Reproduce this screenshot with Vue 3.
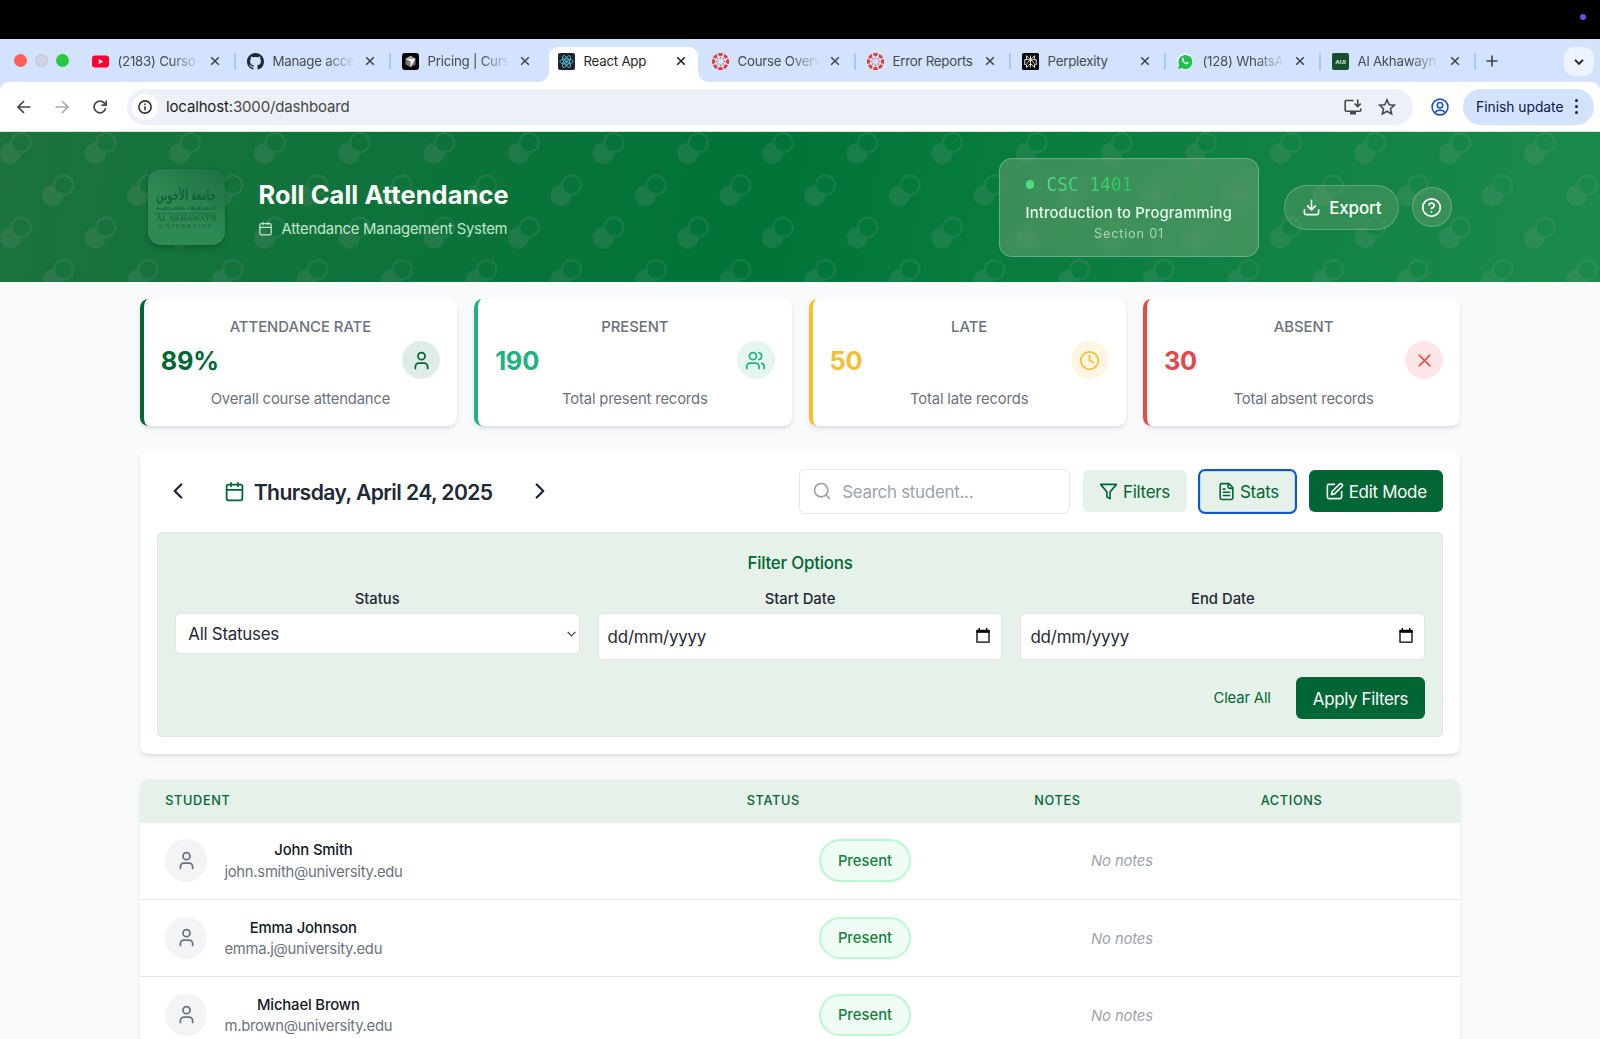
<script setup>
const tabs = [
  { icon: 'youtube', title: '(2183) Curso' },
  { icon: 'github', title: 'Manage acce' },
  { icon: 'cursor', title: 'Pricing | Curs' },
  { icon: 'react', title: 'React App', active: true },
  { icon: 'canvas', title: 'Course Overv' },
  { icon: 'canvas', title: 'Error Reports', full: true },
  { icon: 'perplexity', title: 'Perplexity', full: true },
  { icon: 'whatsapp', title: '(128) WhatsA' },
  { icon: 'aui', title: 'Al Akhawayn' },
]
const stats = [
  { label: 'Attendance Rate', value: '89%', note: 'Overall course attendance', tone: 'rate' },
  { label: 'Present', value: '190', note: 'Total present records', tone: 'present' },
  { label: 'Late', value: '50', note: 'Total late records', tone: 'late' },
  { label: 'Absent', value: '30', note: 'Total absent records', tone: 'absent' },
]
const students = [
  { name: 'John Smith', email: 'john.smith@university.edu' },
  { name: 'Emma Johnson', email: 'emma.j@university.edu' },
  { name: 'Michael Brown', email: 'm.brown@university.edu' },
]
const spokes = [0, 45, 90, 135, 180, 225, 270, 315]
</script>

<template>
  <div class="screen">
    <div class="menubar"><span class="rec"></span></div>

    <div class="tabstrip">
      <div class="lights"><i class="red"></i><i class="grey"></i><i class="green"></i></div>
      <div class="tabs">
        <div v-for="(t, i) in tabs" :key="i" class="tab" :class="{ active: t.active, before: i === 2 }">
          <svg class="fav" viewBox="0 0 17 17">
            <template v-if="t.icon === 'youtube'">
              <rect y="2.6" width="17" height="12" rx="3" fill="#ff0033" />
              <path d="M6.8 6v5.2l4.4-2.6z" fill="#fff" />
            </template>
            <path v-else-if="t.icon === 'github'" transform="scale(1.0625)" fill="#1f2937" d="M8 0C3.58 0 0 3.58 0 8c0 3.54 2.29 6.53 5.47 7.59.4.07.55-.17.55-.38 0-.19-.01-.82-.01-1.49-2.01.37-2.53-.49-2.69-.94-.09-.23-.48-.94-.82-1.13-.28-.15-.68-.52-.01-.53.63-.01 1.08.58 1.23.82.72 1.21 1.87.87 2.33.66.07-.52.28-.87.51-1.07-1.78-.2-3.64-.89-3.64-3.95 0-.87.31-1.59.82-2.15-.08-.2-.36-1.02.08-2.12 0 0 .67-.21 2.2.82.64-.18 1.32-.27 2-.27s1.36.09 2 .27c1.53-1.04 2.2-.82 2.2-.82.44 1.1.16 1.92.08 2.12.51.56.82 1.27.82 2.15 0 3.07-1.87 3.75-3.65 3.95.29.25.54.73.54 1.48 0 1.07-.01 1.93-.01 2.2 0 .21.15.46.55.38A8.01 8.01 0 0 0 16 8c0-4.42-3.58-8-8-8z" />
            <template v-else-if="t.icon === 'cursor'">
              <rect width="17" height="17" rx="3" fill="#050505" />
              <path d="M8.5 2.8l5 2.9v5.7l-5 2.9-5-2.9V5.7z" fill="#777" />
              <path d="M3.5 5.7h10l-5 8.6V8.6z" fill="#f2f2f2" />
              <path d="M8.5 2.8l5 2.9h-10z" fill="#a5a5a5" />
            </template>
            <template v-else-if="t.icon === 'react'">
              <rect width="17" height="17" rx="2" fill="#20232a" />
              <g fill="none" stroke="#5ccfee" stroke-width=".8">
                <ellipse cx="8.5" cy="8.5" rx="6.6" ry="2.6" />
                <ellipse cx="8.5" cy="8.5" rx="6.6" ry="2.6" transform="rotate(60 8.5 8.5)" />
                <ellipse cx="8.5" cy="8.5" rx="6.6" ry="2.6" transform="rotate(120 8.5 8.5)" />
              </g>
              <circle cx="8.5" cy="8.5" r="1.3" fill="#5ccfee" />
            </template>
            <template v-else-if="t.icon === 'canvas'">
              <g v-for="a in spokes" :key="a" :transform="`rotate(${a} 8.5 8.5)`" fill="#d9413a">
                <path d="M6 .3Q8.5 -.4 11 .3Q10.700 3.200 8.500 3.200Q6.300 3.200 6 .3z" />
                <circle cx="8.5" cy="4.800" r=".7" />
              </g>
            </template>
            <template v-else-if="t.icon === 'perplexity'">
              <rect width="17" height="17" rx="1.5" fill="#0a0a0a" />
              <path d="M8.5 2.5v12M4.500 2.700l4 4 4-4v4h1.800v5h-1.800v2.800l-4-4-4 4v-2.800H2.700v-5h1.800zM4.500 6.700h8M8.500 6.700l-4 4M8.500 6.700l4 4" fill="none" stroke="#f3f3ea" stroke-width=".9" />
            </template>
            <template v-else-if="t.icon === 'whatsapp'">
              <circle cx="8" cy="8.5" r="8" fill="#fff" />
              <path d="M1 16l1.100-4A7 7 0 1 1 4.700 14.900z" fill="#22bf4f" />
              <path d="M5.400 5.200c.5-.6 1.100-.4 1.300.1l.5 1.200-.6.900c.6 1.200 1.400 1.900 2.500 2.300l.8-.9 1.500.8c.3.200.1 1.200-.6 1.500-2.700 1-6.800-3.300-5.400-5.900z" fill="#fff" />
            </template>
            <template v-else>
              <rect width="17" height="17" rx="2" fill="#17502f" />
              <text x="8.5" y="11" text-anchor="middle" font-family="Liberation Sans, sans-serif" font-weight="700" font-size="6.2" fill="#e8efe9">AUI</text>
            </template>
          </svg>
          <span class="title" :class="{ fade: !t.full && !t.active }">{{ t.title }}</span>
          <svg class="close" viewBox="0 0 10 10"><path d="M1.200 1.200l7.600 7.600M8.800 1.200l-7.600 7.600" /></svg>
        </div>
      </div>
      <svg class="plus" viewBox="0 0 12 12"><path d="M6 .5v11M.5 6h11" /></svg>
      <div class="tabmenu"><svg viewBox="0 0 10 6"><path d="M1 .8l4 4 4-4" /></svg></div>
    </div>

    <div class="toolbar">
      <svg class="nav" viewBox="0 0 14 14"><path d="M13.500 7H1.300M7 1L1 7l6 6" /></svg>
      <svg class="nav dim" viewBox="0 0 14 14"><path d="M.5 7h12.200M7 1l6 6-6 6" /></svg>
      <svg class="nav" viewBox="0 0 14 14"><path d="M12.600 8.300A5.800 5.800 0 1 1 11.200 3l1.400 1.500" /><path d="M13.200 .5v4.700H8.500" /></svg>
      <div class="omnibox">
        <span class="info"><svg viewBox="0 0 14 14"><circle cx="7" cy="7" r="6.100" /><path d="M7 6.300v4M7 3.500v1.500" /></svg></span>
        <span class="url"><b>localhost</b>:3000/dashboard</span>
        <svg class="install" viewBox="0 0 18 16"><path d="M9.500 1.500H2.200a1 1 0 0 0-1 1v8.800a1 1 0 0 0 1 1h13.600a1 1 0 0 0 1-1V9.500M13.700 .5v6.800M10.700 4.600l3 3 3-3" /><path d="M6 14h6" stroke-width="3" /></svg>
        <svg class="star" viewBox="0 0 18 18"><path d="M9 1.800l2.150 4.900 5.250.5-3.950 3.500 1.150 5.200L9 13.200l-4.600 2.700 1.150-5.200L1.600 7.200l5.250-.5z" /></svg>
      </div>
      <svg class="profile" viewBox="0 0 18 18"><circle cx="9" cy="9" r="7.900" /><circle cx="9" cy="7.200" r="2.700" /><path d="M3.700 14.500c2.800-3.200 7.800-3.200 10.600 0" /></svg>
      <div class="update">Finish update<span class="dots"><i></i><i></i><i></i></span></div>
    </div>

    <header class="hero">
      <svg class="pattern" width="1600" height="150">
        <defs>
          <pattern id="circles" width="80" height="80" patternUnits="userSpaceOnUse" patternTransform="scale(1.0582)">
            <path fill="#a4a89e" d="M50 50c0-5.523 4.477-10 10-10s10 4.477 10 10-4.477 10-10 10c0 5.523-4.477 10-10 10s-10-4.477-10-10 4.477-10 10-10zM10 10c0-5.523 4.477-10 10-10s10 4.477 10 10-4.477 10-10 10c0 5.523-4.477 10-10 10S0 25.523 0 20s4.477-10 10-10zm10 8c4.418 0 8-3.582 8-8s-3.582-8-8-8-8 3.582-8 8 3.582 8 8 8zm40 40c4.418 0 8-3.582 8-8s-3.582-8-8-8-8 3.582-8 8 3.582 8 8 8z" />
          </pattern>
        </defs>
        <rect width="1600" height="150" fill="url(#circles)" />
      </svg>
      <div class="hero-inner">
        <div class="logo">
          <span class="ar">جامعة الأخوين</span>
          <span class="tif">ⵜⴰⵙⴷⴰⵡⵉⵜ ⵏ ⵍⴰⵅⴰⵡⴰⵢⵏ</span>
          <span class="en">AL AKHAWAYN</span>
          <span class="uni">UNIVERSITY</span>
        </div>
        <div class="brand">
          <h1>Roll Call Attendance</h1>
          <p>
            <svg class="ic" viewBox="0 0 24 24"><rect x="3" y="4" width="18" height="18" rx="2" /><path d="M16 2v4M8 2v4M3 10h18" /></svg>
            <span>Attendance Management System</span>
          </p>
        </div>
        <div class="course">
          <div class="code"><i></i><span>CSC 1401</span></div>
          <div class="name">Introduction to Programming</div>
          <div class="section">Section 01</div>
        </div>
        <button class="export">
          <svg class="ic" viewBox="0 0 24 24"><path d="M21 15v4a2 2 0 0 1-2 2H5a2 2 0 0 1-2-2v-4M7 10l5 5 5-5M12 15V3" /></svg>
          <span>Export</span>
        </button>
        <button class="help">
          <svg class="ic" viewBox="0 0 24 24"><circle cx="12" cy="12" r="10" /><path d="M9.090 9a3 3 0 0 1 5.830 1c0 2-3 3-3 3M12 17h.01" /></svg>
        </button>
      </div>
    </header>

    <main>
      <section class="stats">
        <article v-for="s in stats" :key="s.tone" class="stat" :class="s.tone">
          <h3>{{ s.label }}</h3>
          <div class="line">
            <strong>{{ s.value }}</strong>
            <span class="badge">
              <svg class="ic" viewBox="0 0 24 24">
                <path v-if="s.tone === 'rate'" d="M19 21v-2a4 4 0 0 0-4-4H9a4 4 0 0 0-4 4v2M16 7a4 4 0 1 1-8 0 4 4 0 0 1 8 0z" />
                <path v-else-if="s.tone === 'present'" d="M16 21v-2a4 4 0 0 0-4-4H6a4 4 0 0 0-4 4v2M13 7a4 4 0 1 1-8 0 4 4 0 0 1 8 0zM22 21v-2a4 4 0 0 0-3-3.870M16 3.130a4 4 0 0 1 0 7.750" />
                <template v-else-if="s.tone === 'late'"><circle cx="12" cy="12" r="10" /><path d="M12 6v6l4 2" /></template>
                <path v-else d="M18 6L6 18M6 6l12 12" />
              </svg>
            </span>
          </div>
          <p>{{ s.note }}</p>
        </article>
      </section>

      <section class="panel">
        <div class="bar">
          <svg class="ic chev" viewBox="0 0 24 24"><path d="M15 18l-6-6 6-6" /></svg>
          <div class="date">
            <svg class="ic" viewBox="0 0 24 24"><rect x="3" y="4" width="18" height="18" rx="2" /><path d="M16 2v4M8 2v4M3 10h18" /></svg>
            <h2>Thursday, April 24, 2025</h2>
          </div>
          <svg class="ic chev next" viewBox="0 0 24 24"><path d="M9 18l6-6-6-6" /></svg>
          <div class="search">
            <svg class="ic" viewBox="0 0 24 24"><circle cx="11" cy="11" r="8" /><path d="M21 21l-4.300-4.300" /></svg>
            <span>Search student...</span>
          </div>
          <button class="btn soft filters">
            <svg class="ic" viewBox="0 0 24 24"><path d="M22 3H2l8 9.460V19l4 2v-8.540L22 3z" /></svg><span>Filters</span>
          </button>
          <button class="btn soft focus">
            <svg class="ic" viewBox="0 0 24 24"><path d="M15 2H6a2 2 0 0 0-2 2v16a2 2 0 0 0 2 2h12a2 2 0 0 0 2-2V7zM14 2v4a2 2 0 0 0 2 2h4M10 9H8M16 13H8M16 17H8" /></svg><span>Stats</span>
          </button>
          <button class="btn solid edit">
            <svg class="ic" viewBox="0 0 24 24"><path d="M12 3H5a2 2 0 0 0-2 2v14a2 2 0 0 0 2 2h14a2 2 0 0 0 2-2v-7" /><path d="M18.375 2.625a2.120 2.120 0 0 1 3 3L12 15l-4 1 1-4z" /></svg><span>Edit Mode</span>
          </button>
        </div>

        <div class="options">
          <h4>Filter Options</h4>
          <div class="fields">
            <div class="field">
              <label>Status</label>
              <div class="control select"><span>All Statuses</span><svg viewBox="0 0 10 6"><path d="M.7 .7L5 5 9.300 .7" /></svg></div>
            </div>
            <div v-for="f in ['Start Date', 'End Date']" :key="f" class="field">
              <label>{{ f }}</label>
              <div class="control day">
                <span>dd/mm/yyyy</span>
                <svg viewBox="0 0 14 15"><path d="M1 3.500h12v10.700H1z" fill="none" stroke="#000" stroke-width="1.300" /><path d="M.4 1.800h13.200v3H.4zM2.600 0h1.400v2H2.600zM10 0h1.400v2H10z" fill="#000" /></svg>
              </div>
            </div>
          </div>
          <div class="actions"><button class="clear">Clear All</button><button class="btn solid apply"><span>Apply Filters</span></button></div>
        </div>
      </section>

      <section class="table">
        <div class="row head"><span>STUDENT</span><span>STATUS</span><span>NOTES</span><span>ACTIONS</span></div>
        <div v-for="p in students" :key="p.email" class="row body">
          <div class="student">
            <span class="avatar"><svg class="ic" viewBox="0 0 24 24"><path d="M19 21v-2a4 4 0 0 0-4-4H9a4 4 0 0 0-4 4v2" /><circle cx="12" cy="7" r="4" /></svg></span>
            <div class="who"><b>{{ p.name }}</b><span>{{ p.email }}</span></div>
          </div>
          <div class="cell"><span class="pill">Present</span></div>
          <div class="cell"><em>No notes</em></div>
          <div></div>
        </div>
      </section>
    </main>
  </div>
</template>

<style>
html { font-size: 16.93px; }
body { margin: 0; overflow: hidden; }
</style>

<style scoped>
* { box-sizing: border-box; }
.screen { width: 1600px; height: 1039px; overflow: hidden; background: #f9fafb; font-family: Inter, sans-serif; color: #1f2937; }
h1, h2, h3, h4, p { margin: 0; }
button { font: inherit; margin: 0; }
svg { display: block; flex: none; }
.ic { fill: none; stroke: currentColor; stroke-width: 2; stroke-linecap: round; stroke-linejoin: round; }

.menubar { height: 39px; background: #000; display: flex; justify-content: flex-end; padding: 14px 14px 0 0; }
.rec { width: 6px; height: 6px; border-radius: 50%; background: #5b54e8; }

.tabstrip { height: 43px; background: #d3e2fd; display: flex; }
.lights { width: 79.500px; flex: none; display: flex; gap: 8px; padding: 15px 0 0 13.500px; }
.lights i { width: 13px; height: 13px; border-radius: 50%; }
.red { background: #ff5f57; }
.grey { background: #ced4e1; border: 1px solid #c0c6d4; }
.green { background: #28c840; }
.tabs { display: flex; width: 1395px; flex: none; }
.tab { width: 155px; height: 44px; position: relative; display: flex; align-items: center; padding-left: 12px; font-size: 13.300px; color: #474b50; }
.tab::after { content: ''; position: absolute; right: -1px; top: 14px; width: 2px; height: 17px; border-radius: 1px; background: #a8c7fa; }
.tab.before::after { display: none; }
.fav { width: 17px; height: 17px; }
.title { margin-left: 9px; width: 80px; white-space: nowrap; letter-spacing: -.25px; }
.title.fade { -webkit-mask-image: linear-gradient(90deg, #000 52px, transparent 82px); mask-image: linear-gradient(90deg, #000 52px, transparent 82px); }
.close { width: 10px; height: 10px; margin-left: 12px; fill: none; stroke: #3f4347; stroke-width: 1.500; }
.tab.active { color: #1f1f1f; padding-left: 13px; }
.tab.active .close { stroke: #1f1f1f; }
.tab.active > * { position: relative; z-index: 1; }
.tab.active::before { content: ''; position: absolute; left: 4.500px; right: 1.500px; top: 7.500px; bottom: 0; background: #fff; border-radius: 9px 9px 0 0; z-index: 0; }
.tab.active::after { left: -5.500px; right: -8.500px; top: auto; bottom: 1px; width: auto; height: 10px; border-radius: 0; background: radial-gradient(circle at 0 0, transparent 9.500px, #fff 10px) left / 10px 10px no-repeat, radial-gradient(circle at 100% 0, transparent 9.500px, #fff 10px) right / 10px 10px no-repeat; }
.plus { width: 12px; height: 12px; margin: 15.500px 0 0 11.500px; fill: none; stroke: #3f4347; stroke-width: 1.600; }
.tabmenu { width: 30px; height: 29px; border-radius: 10px; background: #ecf2fe; margin: 8px 6px 0 auto; display: flex; align-items: center; justify-content: center; }
.tabmenu svg { width: 10px; height: 6px; fill: none; stroke: #1f1f1f; stroke-width: 1.900; }

.toolbar { height: 50px; background: linear-gradient(#fff, #fff) top / 100% 49px no-repeat, #d5e8dc; display: flex; align-items: center; padding: 0 6px 1px 16.500px; position: relative; }
.toolbar::before { content: ''; position: absolute; inset: 0 0 auto; height: 8px; background: radial-gradient(circle at 100% 100%, transparent 7.500px, #d3e2fd 8px) left / 8px 8px no-repeat, radial-gradient(circle at 0 100%, transparent 7.500px, #d3e2fd 8px) right / 8px 8px no-repeat; }
.nav { width: 14px; height: 14px; margin-right: 24px; fill: none; stroke: #474747; stroke-width: 1.700; }
.dim { stroke: #a9abae; }
.omnibox { width: 1286px; height: 36px; border-radius: 18px; background: #ecf0f9; display: flex; align-items: center; padding: 0 17px 0 5px; margin-left: -4px; }
.info { width: 26px; height: 26px; border-radius: 50%; background: #fff; display: flex; align-items: center; justify-content: center; }
.info svg { width: 14px; height: 14px; fill: none; stroke: #303134; stroke-width: 1.600; }
.url { margin-left: 8.500px; font-size: 15px; letter-spacing: -.15px; color: #474747; }
.url b { font-weight: 400; color: #1f1f1f; }
.install { width: 18px; height: 16px; margin-left: auto; margin-right: 16px; fill: none; stroke: #474747; stroke-width: 1.600; }
.star { width: 18px; height: 18px; fill: none; stroke: #474747; stroke-width: 1.600; }
.profile { width: 18px; height: 18px; margin: 0 13.500px 0 18.500px; fill: none; stroke: #1c55c4; stroke-width: 1.600; }
.update { width: 131px; height: 36px; border-radius: 18px; background: #d3e2fd; display: flex; align-items: center; justify-content: space-between; padding: 0 16px 0 13.500px; font-size: 13.800px; color: #0a2048; white-space: nowrap; }
.dots { display: flex; flex-direction: column; gap: 3px; }
.dots i { width: 3px; height: 3px; border-radius: 50%; background: #0a2048; }

.hero { height: 150px; position: relative; background: linear-gradient(100deg, #1b723c 0%, #007437 48%, #067b3c 60%, #1c8a4b 100%); }
.pattern { position: absolute; inset: 0; opacity: .14; }
.hero-inner { position: relative; height: 150px; width: 1304px; margin: 0 auto; display: flex; align-items: center; }
.logo { width: 76.500px; height: 76.500px; border-radius: 13px; background: linear-gradient(35deg, #2d8a52, #2c8a52 45%, #1d6f40); box-shadow: 0 3px 5px rgba(0, 50, 20, .3), 0 0 1px rgba(0, 50, 20, .6); display: flex; flex-direction: column; align-items: center; color: #17603a; white-space: nowrap; }
.ar { font: 700 13px/18px 'DejaVu Sans', sans-serif; margin-top: 17px; height: 18px; transform: scale(.66, 1.150); }
.tif { font: 700 4.600px/6px 'DejaVu Sans', sans-serif; margin-top: 2px; }
.en { font: 8.600px/9px 'Liberation Serif', serif; margin-top: 1px; border-top: .5px solid rgba(23, 96, 58, .6); letter-spacing: -.15px; }
.uni { font: 6.500px/6px 'Liberation Serif', serif; letter-spacing: 1.550px; }
.brand { margin-left: 34px; padding-top: 4px; }
.brand h1 { font-size: 1.500rem; line-height: 2rem; font-weight: 700; letter-spacing: .1px; color: #fff; }
.brand p { display: flex; align-items: center; font-size: .875rem; line-height: 1.250rem; letter-spacing: -.2px; color: #c3e6ce; margin-top: 6.500px; }
.brand p .ic { width: 15px; height: 15px; margin: -1px 8.500px 0 -.5px; }
.course { margin-left: auto; width: 260px; height: 99px; background: rgba(118, 163, 118, .47); backdrop-filter: blur(6px); border: 1px solid rgba(255, 255, 255, .25); border-radius: 13px; padding: 12px 0 0 25.500px; }
.code { display: flex; align-items: center; height: 28px; }
.code i { width: 8.500px; height: 8.500px; border-radius: 50%; background: #4ade80; }
.code span { margin-left: 12.500px; font: 17.500px/28px 'DejaVu Sans Mono', monospace; letter-spacing: .2px; transform: translateY(-1px) scaleY(1.130); background: linear-gradient(90deg, #4fdc84, #2cc765); -webkit-background-clip: text; background-clip: text; color: transparent; }
.name { font-size: .875rem; line-height: 1.250rem; font-weight: 500; letter-spacing: .15px; color: #e6f8ec; margin-top: 4px; white-space: nowrap; }
.section { width: 207px; text-align: center; font-size: .750rem; line-height: 1rem; letter-spacing: .8px; color: #a9d6b7; margin-top: 2px; }
.export { width: 115px; height: 45px; margin-left: 25px; border-radius: 23px; display: flex; align-items: center; justify-content: center; gap: 8.500px; padding: 1px 0 0; color: #fff; font-size: 1rem; letter-spacing: -.15px; font-weight: 500; background: rgba(118, 163, 118, .33); border: 1px solid rgba(255, 255, 255, .22); }
.export .ic { width: 19px; height: 19px; }
.help { width: 40px; height: 40px; margin: 0 .5px 0 12.500px; border-radius: 50%; padding: 0; display: flex; align-items: center; justify-content: center; color: #fff; background: rgba(118, 163, 118, .36); border: 1px solid rgba(255, 255, 255, .22); }
.help .ic { width: 21px; height: 21px; }

main { width: 1320.500px; margin: 0 auto; padding-top: 17px; }
.stats { display: grid; grid-template-columns: repeat(4, 1fr); gap: 17px; }
.stat { height: 127px; background: #fff; border-radius: .5rem; border-left: 4.200px solid; padding: 18px 17px 0; box-shadow: 0 3px 6px -1px rgba(0, 0, 0, .1), 0 2px 4px -2px rgba(0, 0, 0, .1); text-align: center; }
.stat h3 { font-size: .875rem; line-height: 1.250rem; font-weight: 500; text-transform: uppercase; color: #6b7280; }
.line { display: flex; align-items: center; justify-content: space-between; margin-top: 3px; height: 38px; }
.line strong { font-size: 1.500rem; font-weight: 700; letter-spacing: -.2px; padding-top: 1px; }
.badge { width: 38px; height: 38px; border-radius: 50%; display: flex; align-items: center; justify-content: center; }
.badge .ic { width: 21px; height: 21px; }
.stat p { font-size: .875rem; line-height: 1.250rem; letter-spacing: -.16px; color: #6b7280; margin-top: 10px; }
.rate { color: #006633; border-color: #006633; }
.rate .badge { background: #e0ece6; }
.present { color: #20b183; border-color: #20b183; }
.present .badge { background: #e5f6ee; }
.late { color: #f4bf33; border-color: #f4bf33; }
.late .badge { background: #fef6e2; }
.absent { color: #e2494a; border-color: #e2494a; }
.absent .badge { background: #fde6e6; }

.panel { margin-top: 25px; height: 303px; background: #fff; border-radius: .5rem; padding: 17px; box-shadow: 0 3px 6px -1px rgba(0, 0, 0, .1), 0 2px 4px -2px rgba(0, 0, 0, .1); }
.bar { display: flex; align-items: center; height: 46px; }
.chev { width: 26px; height: 26px; margin-left: 8px; color: #1f2937; stroke-width: 2.200; }
.date { display: flex; align-items: center; width: 269px; margin-left: 33px; }
.date .ic { width: 21px; height: 21px; color: #006633; }
.date h2 { font-size: 1.250rem; font-weight: 600; letter-spacing: -.6px; margin-left: 9px; padding-top: 2px; white-space: nowrap; }
.next { margin-left: 34.500px; }
.search { margin-left: auto; width: 271px; height: 45px; border: 1px solid #e5e7eb; border-radius: 6px; display: flex; align-items: center; padding-left: 12px; color: #9ca3af; font-size: 1rem; letter-spacing: -.28px; }
.search .ic { width: 20px; height: 20px; }
.search span { margin-left: 10px; padding-top: 2px; }
.btn { border: 0; border-radius: 6px; height: 42.500px; padding: 0; display: flex; align-items: center; justify-content: center; gap: 4.500px; font-size: 1rem; letter-spacing: -.28px; white-space: nowrap; }
.btn span { padding-top: 1px; }
.btn .ic { width: 19px; height: 19px; }
.soft { background: #e6f1e9; color: #006633; }
.solid { background: #006633; color: #fff; }
.filters { width: 104px; margin-left: 12.500px; }
.focus { width: 99px; height: 45px; margin-left: 11.500px; border: 2px solid #1059c4; box-shadow: inset 0 0 0 1px #b9d9f7; border-radius: 7px; }
.edit { width: 134.500px; margin-left: 11.500px; }

.options { margin-top: 17.500px; height: 205px; background: #e6f1e9; border: 1px solid #dfe6e3; border-radius: 5px; padding: 17px; }
.options h4 { font-size: 1rem; line-height: 1.500rem; font-weight: 500; letter-spacing: -.23px; color: #006633; text-align: center; margin-top: 1px; }
.fields { display: grid; grid-template-columns: repeat(3, 1fr); gap: 18px; margin-top: 13px; }
.field label { display: block; font-size: .875rem; line-height: 20px; font-weight: 500; text-align: center; }
.control { background: #fff; border: 1px solid #e1e6e6; border-radius: 5px; display: flex; align-items: center; justify-content: space-between; font-size: 1rem; letter-spacing: -.27px; margin-top: 4.500px; }
.control span { padding-top: 1.500px; }
.select { height: 40.500px; padding: 0 3px 0 12.500px; }
.select svg { width: 9px; height: 6px; margin-top: 1px; fill: none; stroke: #1f2937; stroke-width: 1.200; }
.day { height: 46.500px; padding: 0 11.500px 0 9px; letter-spacing: -.2px; }
.day svg { width: 14px; height: 15px; margin-top: -2px; }
.actions { display: flex; justify-content: flex-end; align-items: center; margin-top: 17px; }
.clear { background: none; border: 0; padding: 0; font-size: .875rem; letter-spacing: -.15px; color: #006633; margin-right: 25px; }
.apply { width: 129.500px; letter-spacing: -.35px; }

.table { margin-top: 25px; background: #fff; border-radius: .5rem .5rem 0 0; overflow: hidden; box-shadow: 0 3px 6px -1px rgba(0, 0, 0, .1); }
.row { display: grid; grid-template-columns: 581.500px 287.500px 226.500px 1fr; align-items: center; }
.head { height: 43.500px; background: #e6f1e9; font-size: .750rem; font-weight: 500; letter-spacing: .68px; color: #006633; }
.head span { padding: 0 0 0 25.400px; }
.body { height: 77.200px; border-bottom: 1px solid #e5e7eb; }
.student { display: flex; align-items: center; padding-left: 25.400px; }
.avatar { width: 42.300px; height: 42.300px; border-radius: 50%; background: #f3f4f6; display: flex; align-items: center; justify-content: center; color: #6b7280; }
.avatar .ic { width: 21px; height: 21px; }
.who { margin-left: 17px; padding-top: 2.500px; display: flex; flex-direction: column; align-items: center; font-size: .875rem; line-height: 21.500px; letter-spacing: -.26px; color: #6b7280; }
.who b { font-weight: 500; letter-spacing: -.13px; color: #111827; }
.cell { display: flex; justify-content: center; }
.pill { width: 92px; height: 42.300px; border-radius: 22px; border: 2px solid #bbf7d0; background: #f0fdf4; color: #15803d; font-size: .875rem; font-weight: 500; display: flex; align-items: center; justify-content: center; padding-top: 1px; }
em { font-size: .875rem; letter-spacing: -.12px; color: #9ca3af; padding-top: 1.500px; }
</style>
